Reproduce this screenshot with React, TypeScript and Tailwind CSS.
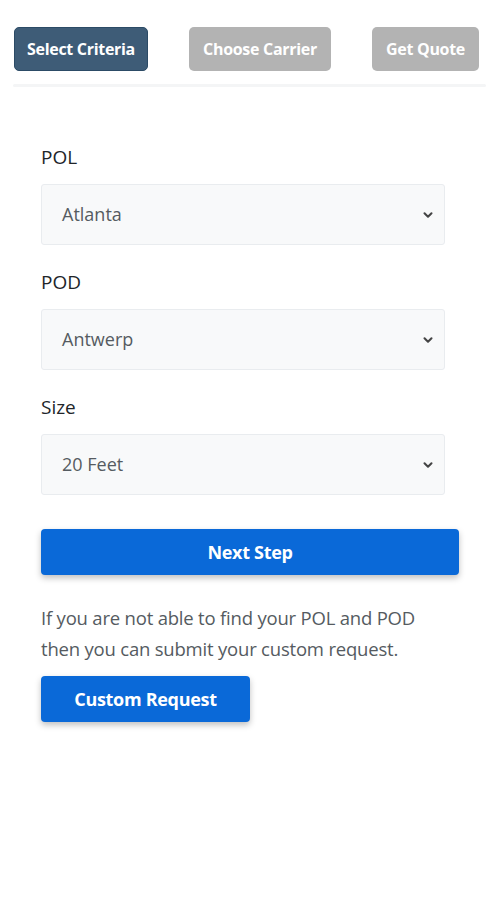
import { ChevronDown } from 'lucide-react';

type SelectProps = {
  label: string;
  value: string;
};

function SelectField({ label, value }: SelectProps) {
  return (
    <div>
      <label className="block text-[19px] leading-[24px] text-[#212529]">{label}</label>
      <div className="mt-[15px] mr-[13px] flex h-[61px] items-center justify-between rounded-[3px] border border-[#e9ecef] bg-[#f8f9fa] pl-[20px] pr-[9px]">
        <span className="text-[18px] text-[#555b61]">{value}</span>
        <ChevronDown className="h-[14px] w-[14px] text-[#444]" strokeWidth={3.5} />
      </div>
    </div>
  );
}

export default function App() {
  return (
    <div className="min-h-[900px] w-[499px] bg-white" style={{ fontFamily: '"Open Sans", "Liberation Sans", sans-serif' }}>
      <div className="flex items-start justify-between pl-[14px] pr-[20px] pt-[27px]">
        <button className="h-[44px] w-[134px] rounded-[5px] border border-[#2c4b66] bg-[#3e5c77] text-[16px] font-bold tracking-[-0.3px] text-white">
          Select Criteria
        </button>
        <button className="h-[44px] w-[142px] rounded-[5px] bg-[#b3b3b3] text-[16px] font-bold tracking-[-0.3px] text-white">
          Choose Carrier
        </button>
        <button className="h-[44px] w-[107px] rounded-[5px] bg-[#b3b3b3] text-[16px] font-bold tracking-[-0.3px] text-white">
          Get Quote
        </button>
      </div>
      <div className="mx-[13px] mt-[13px] h-[3px] rounded-full bg-[#f4f5f6]" />

      <div className="flex flex-col gap-[25px] px-[41px] pt-[58px]">
        <SelectField label="POL" value="Atlanta" />
        <SelectField label="POD" value="Antwerp" />
        <SelectField label="Size" value="20 Feet" />
      </div>

      <div className="px-[41px] pt-[34px]">
        <button className="h-[46px] w-[418px] rounded-[4px] bg-[#0a69d8] text-[18px] font-bold tracking-[-0.3px] text-white shadow-[0_3px_6px_rgba(0,0,0,0.25)]">
          Next Step
        </button>
        <p className="mt-[27px] text-[18.5px] leading-[31px] tracking-[-0.2px] text-[#555b61]">
          If you are not able to find your POL and POD
          <br />
          then you can submit your custom request.
        </p>
        <button className="mt-[12px] h-[46px] w-[209px] rounded-[4px] bg-[#0a69d8] text-[18px] font-bold tracking-[-0.3px] text-white shadow-[0_3px_6px_rgba(0,0,0,0.25)]">
          Custom Request
        </button>
      </div>
    </div>
  );
}
